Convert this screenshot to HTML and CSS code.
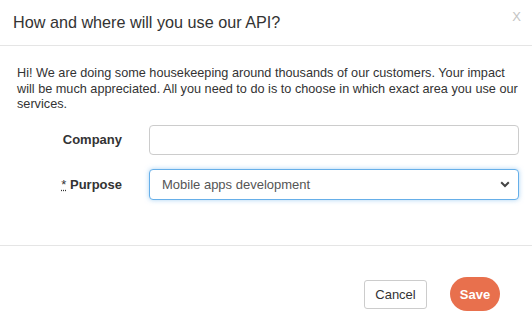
FILE: index.html
```html
<!DOCTYPE html>
<html lang="en">
<head>
  <meta charset="UTF-8">
  <title>API usage</title>
  <link rel="stylesheet" href="styles.css">
</head>
<body>

  <div class="modal">
    <div class="modal-header">
      <h4>How and where will you use our API?</h4>
      <span class="close">X</span>
    </div>

    <div class="modal-body">
      <p>Hi! We are doing some housekeeping around thousands of our customers. Your impact will be much appreciated. All you need to do is to choose in which exact area you use our services.</p>

      <form class="form-grid">
        <label for="company">Company</label>
        <input type="text" id="company" name="company">

        <label for="purpose"><abbr title="required">*</abbr> Purpose</label>
        <div class="select-wrap">
          <select id="purpose" name="purpose" class="focused">
            <option>Mobile apps development</option>
            <option>Web development</option>
            <option>Internal tools</option>
          </select>
          <svg class="chevron" width="10" height="7" viewBox="0 0 10 7">
            <path d="M1.2 1.3 L5 5 L8.8 1.3" fill="none" stroke="#444" stroke-width="2"/>
          </svg>
        </div>
      </form>
    </div>

    <div class="modal-footer">
      <button type="button" class="btn-cancel">Cancel</button>
      <button type="submit" class="btn-save">Save</button>
    </div>
  </div>

</body>
</html>
```

FILE: styles.css
```css
* {
  box-sizing: border-box;
}

body {
  margin: 0;
  font-family: 'Liberation Sans', Arial, sans-serif;
  color: #333;
  background: #fff;
}

.modal {
  width: 532px;
  height: 328px;
  display: flex;
  flex-direction: column;
}

.modal-header {
  height: 46px;
  padding: 0 11px 0 13px;
  border-bottom: 1px solid #e5e5e5;
  display: flex;
  align-items: center;
  justify-content: space-between;
}

.modal-header h4 {
  margin: 0;
  font-size: 16.2px;
  font-weight: normal;
  color: #333;
}

.close {
  font-size: 13px;
  color: #c4c4c4;
  align-self: flex-start;
  margin-top: 9px;
}

.modal-body {
  padding: 20px 13px 0 17px;
  height: 200px;
  border-bottom: 1px solid #e5e5e5;
}

.modal-body p {
  margin: 0 0 12px;
  font-size: 12.7px;
  line-height: 15.5px;
}

.form-grid {
  display: grid;
  grid-template-columns: 105px 1fr;
  column-gap: 27px;
  row-gap: 14px;
  align-items: center;
}

.form-grid label {
  text-align: right;
  font-size: 13px;
  font-weight: bold;
  color: #333;
}

abbr {
  font-weight: normal;
  text-decoration: underline dotted;
  cursor: help;
}

input, select {
  width: 100%;
  height: 30px;
  font-family: inherit;
  font-size: 13px;
  color: #555;
  border: 1px solid #ccc;
  border-radius: 4px;
  padding: 0 12px;
  background: #fff;
}

.select-wrap {
  position: relative;
}

select {
  height: 31px;
  appearance: none;
  -webkit-appearance: none;
  outline: none;
}

select.focused {
  border-color: #66afe9;
  box-shadow: 0 0 5px rgba(102, 175, 233, 0.55);
}

.chevron {
  position: absolute;
  right: 9px;
  top: 12px;
  pointer-events: none;
}

.modal-footer {
  flex: 1;
  display: flex;
  justify-content: flex-end;
  align-items: center;
  gap: 23px;
  padding: 14px 32px 0 0;
}

button {
  font-family: inherit;
  font-size: 13px;
  cursor: pointer;
}

.btn-cancel {
  width: 63px;
  height: 29px;
  background: #fff;
  color: #333;
  border: 1px solid #ccc;
  border-radius: 3px;
}

.btn-save {
  width: 50px;
  height: 34px;
  background: #e8704d;
  color: #fff;
  font-weight: bold;
  border: none;
  border-radius: 17px;
}
```
